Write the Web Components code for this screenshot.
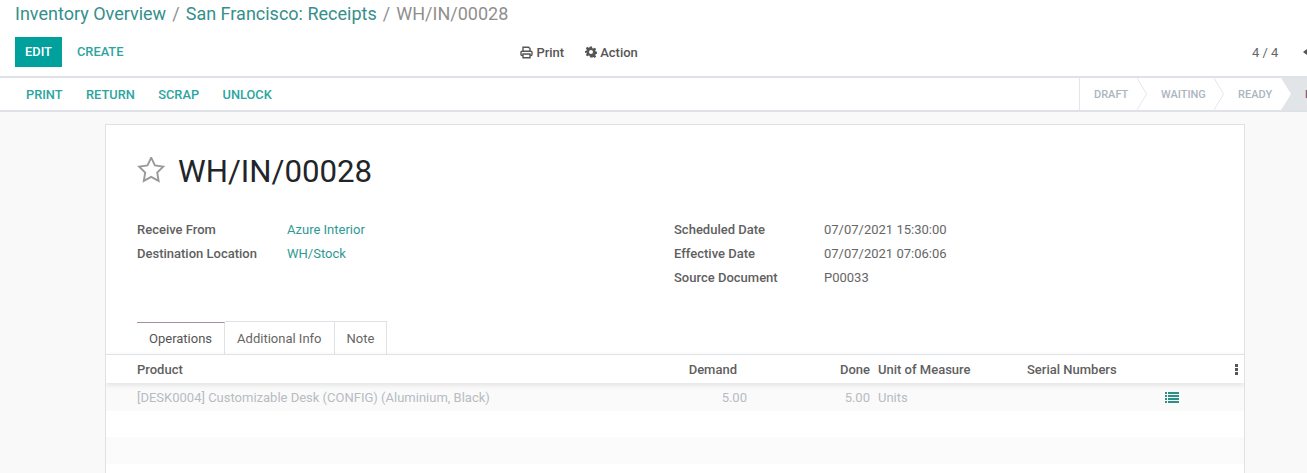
<!DOCTYPE html>
<html>
<head>
<meta charset="utf-8">
<title>WH/IN/00028</title>
<style>
html, body { margin: 0; padding: 0; height: 100%; overflow: hidden; }
body { font-family: Roboto, "Liberation Sans", sans-serif; background: #f9f9f9; color: #4c4c4c; }
</style>
</head>
<body>
<control-panel></control-panel>
<status-bar></status-bar>
<form-sheet></form-sheet>

<script>
class ControlPanel extends HTMLElement {
    connectedCallback() {
        this.attachShadow({ mode: 'open' });
        this.shadowRoot.innerHTML = `
            <style>
                :host { display: block; background: #fff; height: 76px; padding-left: 15px; overflow: hidden; white-space: nowrap; }
                .crumbs { height: 37px; display: flex; align-items: center; gap: 6.1px; font-size: 18px; padding-bottom: 10px; box-sizing: border-box; color: #8f8f8f; }
                .crumbs a { color: #368f8b; }
                .row { display: flex; align-items: center; height: 30px; position: relative; }
                .btn { font-size: 12.8px; font-weight: 500; height: 30px; padding-bottom: 1px; display: flex; align-items: center; box-sizing: border-box; color: #2ca5a0; }
                .edit { background: #00a09d; color: #fff; width: 47px; justify-content: center; }
                .create { margin-left: 15px; }
                .mid { display: flex; gap: 21px; margin-left: 397px; font-size: 13px; font-weight: 500; color: #555; }
                .mid span { display: flex; align-items: center; gap: 3px; }
                .pager { position: absolute; left: 1237px; font-size: 13px; color: #666; }
                .arrow { position: absolute; left: 1288px; top: 12px; width: 0; height: 0; border: 3.5px solid transparent; border-right: 4px solid #555; border-left: 0; }
            </style>
            <div class="crumbs"><a>Inventory Overview</a><span>/</span><a>San Francisco: Receipts</a><span>/</span><span>WH/IN/00028</span></div>
            <div class="row">
                <div class="btn edit">EDIT</div>
                <div class="btn create">CREATE</div>
                <div class="mid">
                    <span><svg width="13" height="13" viewBox="0 0 13 13"><path d="M3 5V1.2h5.6L10 2.6V5M3 9.5H2a1 1 0 0 1-1-1V6.2a1 1 0 0 1 1-1h9a1 1 0 0 1 1 1v2.3a1 1 0 0 1-1 1h-1M3 8h7v3.8H3z" fill="none" stroke="#555" stroke-width="1.4"/></svg>Print</span>
                    <span><svg width="12" height="12" viewBox="0 0 24 24"><path fill="#555" fill-rule="evenodd" d="M10 1h4l.7 3.3 2 .8 2.8-1.8 2.8 2.8-1.8 2.8.8 2 3.3.7v4l-3.3.7-.8 2 1.8 2.8-2.8 2.8-2.8-1.8-2 .8L14 23h-4l-.7-3.3-2-.8-2.8 1.8-2.8-2.8 1.8-2.8-.8-2L-.6 14v-4l3.3-.7.8-2-1.8-2.8 2.8-2.8 2.8 1.8 2-.8zM12 8a4 4 0 1 0 0 8 4 4 0 0 0 0-8z"/></svg>Action</span>
                </div>
                <div class="pager">4 / 4</div>
                <div class="arrow"></div>
            </div>
        `;
    }
}

class StatusBar extends HTMLElement {
    connectedCallback() {
        this.attachShadow({ mode: 'open' });
        this.shadowRoot.innerHTML = `
            <style>
                :host { display: flex; justify-content: space-between; background: #fff; height: 32px; border-top: 2px solid #dee2e6; border-bottom: 2px solid #dee2e6; position: relative; overflow: hidden; white-space: nowrap; }
                .actions { display: flex; align-items: center; gap: 23.5px; padding-left: 26px; font-size: 12.8px; font-weight: 500; color: #2ca5a0; }
                .steps { position: absolute; left: 1079px; top: 0; height: 32px; display: flex; border-left: 1px solid #e4e7ea; font-size: 11px; font-weight: 500; color: #adb5bd; }
                .step { position: relative; display: flex; align-items: center; box-sizing: border-box; height: 32px; }
                .step svg { position: absolute; top: 0; right: -10px; z-index: 1; }
                .current { background: #e2e5e8; color: #7c5a72; padding-left: 24px; width: 60px; }
            </style>
            <div class="actions"><span>PRINT</span><span>RETURN</span><span>SCRAP</span><span>UNLOCK</span></div>
            <div class="steps">
                <div class="step" style="width:57px;padding-left:14px">DRAFT<svg width="10" height="32"><path d="M0 0l9.5 16L0 32" fill="#fff" stroke="#e4e7ea"/></svg></div>
                <div class="step" style="width:77px;padding-left:24px">WAITING<svg width="10" height="32"><path d="M0 0l9.5 16L0 32" fill="#fff" stroke="#e4e7ea"/></svg></div>
                <div class="step" style="width:67px;padding-left:24px">READY<svg width="10" height="32"><path d="M0 0l10 16L0 32" fill="#fff"/></svg></div>
                <div class="current step">D</div>
            </div>
        `;
    }
}

class FormSheet extends HTMLElement {
    connectedCallback() {
        this.attachShadow({ mode: 'open' });
        this.shadowRoot.innerHTML = `
            <style>
                :host { display: block; width: 1138px; height: 360px; margin: 12px 0 0 105px; background: #fff; border: 1px solid #dee2e6; border-bottom: 0; font-size: 13px; overflow: hidden; white-space: nowrap; }
                .title { display: flex; align-items: center; gap: 12px; margin: 27px 0 0 31px; height: 38px; font-size: 31.2px; color: #212529; }
                .groups { display: grid; grid-template-columns: 537px 1fr; margin: 27px 0 0 31px; height: 104px; }
                .field { display: grid; grid-template-columns: 150px 1fr; height: 24px; align-items: center; }
                .field b { font-weight: 500; color: #5f5f5f; }
                .field a { color: #2f9a94; }
                .field span { color: #666; }
                .tabs { display: flex; margin-left: 31px; height: 33px; }
                .tab { display: flex; align-items: center; padding: 0 12px; border: 1px solid #dee2e6; border-left: 0; border-bottom: 0; color: #666; box-sizing: border-box; }
                .tab.on { border-top: 1px solid #a98ea3; background: #fff; position: relative; top: 1px; padding-bottom: 2px; color: #555; }
                .head, .line { display: grid; grid-template-columns: 551px 59px 131px 149px 138px 1fr; height: 28px; align-items: center; padding-left: 31px; }
                .head { border-top: 1px solid #dee2e6; font-weight: 500; color: #5f5f5f; box-shadow: 0 2px 5px rgba(0,0,0,.1); position: relative; }
                .line { background: #fafafa; color: #b6bcc2; }
                .r { text-align: right; }
                .gap { height: 26px; }
                .even { height: 27px; background: #fbfbfb; }
            </style>
            <div class="title">
                <svg width="29" height="28" viewBox="0 0 29 28"><path transform="translate(-.3 -1.8)" d="M14.5 2.5l3.7 7.7 8.3 1.2-6 5.9 1.4 8.4-7.4-4-7.4 4 1.4-8.4-6-5.9 8.3-1.2z" fill="none" stroke="#9a9a9a" stroke-width="1.9"/></svg>
                WH/IN/00028
            </div>
            <div class="groups">
                <div>
                    <div class="field"><b>Receive From</b><a>Azure Interior</a></div>
                    <div class="field"><b>Destination Location</b><a>WH/Stock</a></div>
                </div>
                <div>
                    <div class="field"><b>Scheduled Date</b><span>07/07/2021 15:30:00</span></div>
                    <div class="field"><b>Effective Date</b><span>07/07/2021 07:06:06</span></div>
                    <div class="field"><b>Source Document</b><span>P00033</span></div>
                </div>
            </div>
            <div class="tabs">
                <div class="tab on">Operations</div>
                <div class="tab">Additional Info</div>
                <div class="tab">Note</div>
            </div>
            <div class="head">
                <span>Product</span><span class="r" style="padding-right:10px">Demand</span><span class="r" style="padding-right:8px">Done</span><span>Unit of Measure</span><span>Serial Numbers</span>
                <svg style="justify-self:end;margin-right:6px" width="3" height="11"><rect y="0" width="3" height="3" fill="#555"/><rect y="4" width="3" height="3" fill="#555"/><rect y="8" width="3" height="3" fill="#555"/></svg>
            </div>
            <div class="line">
                <span>[DESK0004] Customizable Desk (CONFIG) (Aluminium, Black)</span><span class="r">5.00</span><span class="r" style="padding-right:8px">5.00</span><span>Units</span><span></span>
                <svg width="14" height="11" viewBox="0 0 14 11"><path fill="#2a9088" d="M0 0h2v2H0zM3 0h11v2H3zM0 3h2v2H0zM3 3h11v2H3zM0 6h2v2H0zM3 6h11v2H3zM0 9h2v2H0zM3 9h11v2H3z"/></svg>
            </div>
            <div class="gap"></div>
            <div class="even"></div>
        `;
    }
}

customElements.define('control-panel', ControlPanel);
customElements.define('status-bar', StatusBar);
customElements.define('form-sheet', FormSheet);
</script>
</body>
</html>
